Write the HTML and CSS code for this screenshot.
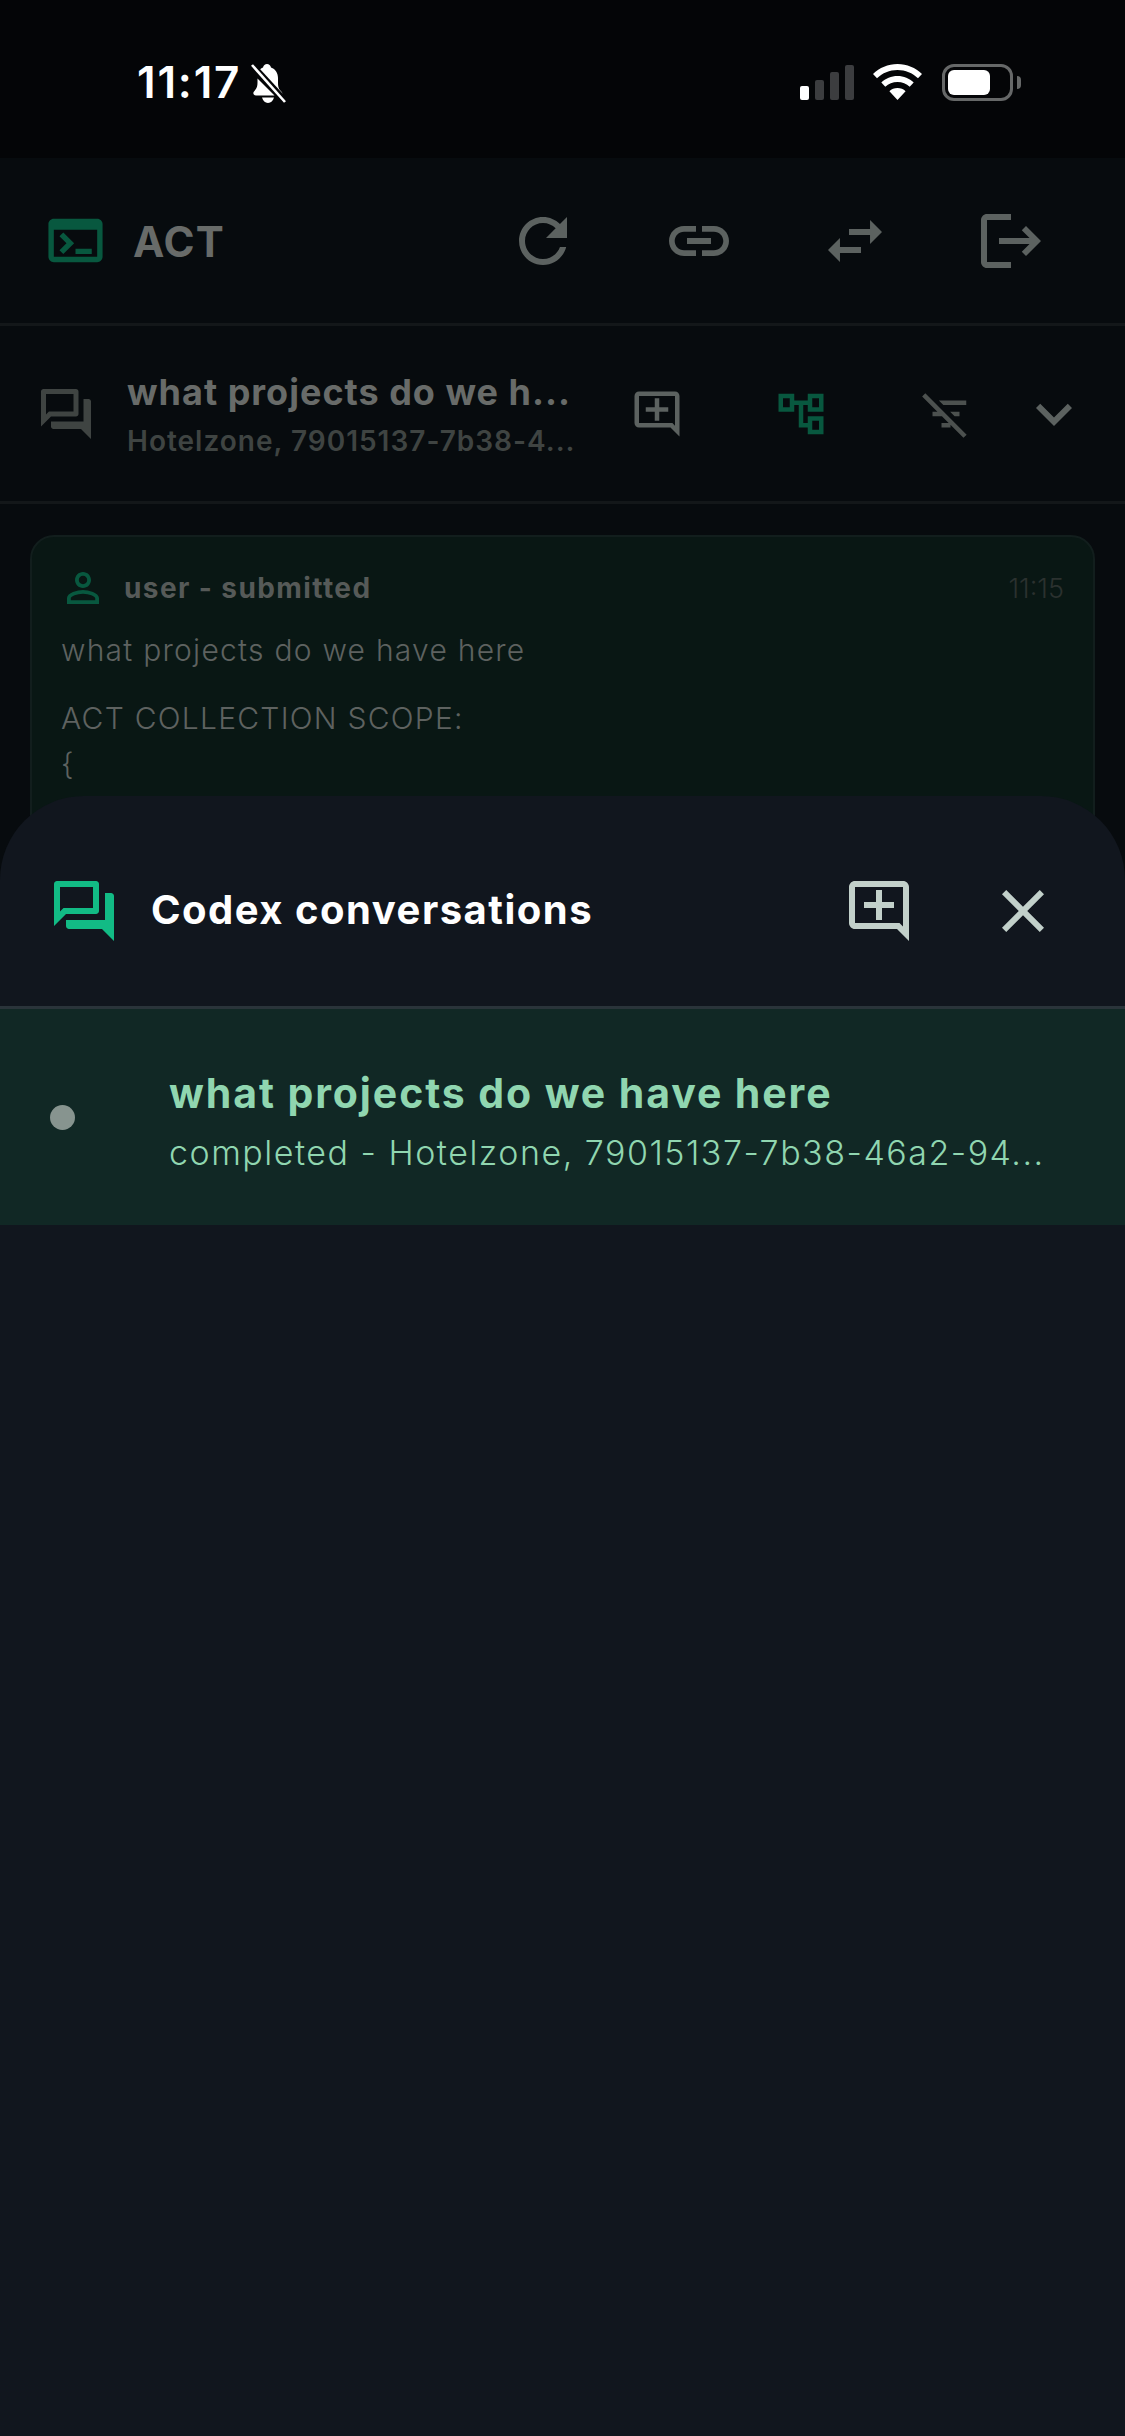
FILE: index.html
```html
<!DOCTYPE html>
<html lang="en">
<head>
<meta charset="utf-8">
<title>ACT</title>
<link rel="stylesheet" href="styles.css">
</head>
<body>
<div class="phone">
  <div class="status">
    <div class="status-left">
      <span class="time">11:17</span>
      <svg class="bell" viewBox="0 0 36 39"><path fill="#fff" d="M17 0c-2 0-3.500 1.500-4 3.500-1.500 .6-3 1.700-4 3L27 26l5 4.800c.5-.8.5-2-.5-3-1.800-1.800-3.500-3.500-3.500-9V14C28 9 25.500 5 21 3.500 20.500 1.500 19 0 17 0zM7.500 14.500v4c0 5-1.600 6.800-3.500 9-1.400 1.700-.5 4 2 4h18.500zM12 33.500c1 3 3 5.500 6 5.500s5-2.500 6-5.500z"/><path stroke="#040507" stroke-width="5" d="M2 0l34 37"/><path stroke="#fff" stroke-width="2.600" d="M2 1l33 37"/></svg>
    </div>
    <div class="status-right">
      <div class="signal"><i class="bar b1 on"></i><i class="bar b2"></i><i class="bar b3"></i><i class="bar b4"></i></div>
      <svg class="wifi" viewBox="0 0 49 36"><path fill="#fff" d="M24.500 0C15 0 6.500 3.700 0 10l4 4.300C9.500 9 16.500 6 24.500 6s15 3 20.500 8.300l4-4.300C42.500 3.700 34 0 24.500 0zM24.500 12c-6.200 0-12 2.400-16.200 6.500l4 4.200C15.500 19.700 19.800 18 24.500 18s9 1.700 12.200 4.700l4-4.200C36.500 14.400 30.700 12 24.500 12zM24.500 24c-3.200 0-6 1.200-8.100 3.200L24.500 36l8.100-8.800C30.500 25.200 27.700 24 24.500 24z"/></svg>
      <div class="battery"><div class="battery-level"></div></div>
      <div class="battery-nub"></div>
    </div>
  </div>

  <header class="app-bar">
    <svg class="ic ic-65 terminal" viewBox="0 0 24 24"><path d="M20 4H4C2.890 4 2 4.900 2 6v12c0 1.100.89 2 2 2h16c1.100 0 2-.9 2-2V6c0-1.100-.89-2-2-2zm0 14H4V8h16v10zm-2-1h-6v-2h6v2zM7.500 17l-1.410-1.410L8.670 13l-2.590-2.590L7.500 9l4 4-4 4z"/></svg>
    <span class="brand">ACT</span>
    <div class="app-actions">
      <svg class="ic ic-72" viewBox="0 0 24 24"><path d="M17.650 6.350C16.200 4.900 14.210 4 12 4c-4.420 0-7.990 3.580-7.990 8s3.570 8 7.990 8c3.730 0 6.840-2.550 7.730-6h-2.080c-.82 2.330-3.040 4-5.650 4-3.310 0-6-2.690-6-6s2.690-6 6-6c1.660 0 3.140.69 4.220 1.780L13 11h7V4l-2.350 2.350z"/></svg>
      <svg class="ic ic-72" viewBox="0 0 24 24"><path d="M3.900 12c0-1.710 1.390-3.100 3.100-3.100h4V7H7c-2.760 0-5 2.240-5 5s2.240 5 5 5h4v-1.900H7c-1.710 0-3.100-1.390-3.100-3.100zM8 13h8v-2H8v2zm9-6h-4v1.900h4c1.710 0 3.100 1.390 3.100 3.100s-1.390 3.100-3.100 3.100h-4V17h4c2.760 0 5-2.240 5-5s-2.240-5-5-5z"/></svg>
      <svg class="ic ic-72" viewBox="0 0 24 24"><path d="M6.990 11L3 15l3.990 4v-3H14v-2H6.990v-3zM21 9l-3.990-4v3H10v2h7.010v3L21 9z"/></svg>
      <svg class="ic ic-72" viewBox="0 0 24 24"><path d="M17 7l-1.410 1.410L18.170 11H8v2h10.170l-2.580 2.580L17 17l5-5zM4 5h8V3H4c-1.100 0-2 .9-2 2v14c0 1.100.9 2 2 2h8v-2H4V5z"/></svg>
    </div>
  </header>

  <section class="conv-bar">
    <svg class="ic ic-60 forum-dim" viewBox="0 0 24 24"><path d="M15 4v7H5.170l-.59.59-.58.58V4h11m1-2H3c-.55 0-1 .45-1 1v14l4-4h10c.55 0 1-.45 1-1V3c0-.55-.45-1-1-1zm5 4h-2v9H6v2c0 .55.45 1 1 1h11l4 4V7c0-.55-.45-1-1-1z"/></svg>
    <div class="conv-text">
      <div class="conv-title">what projects do we h...</div>
      <div class="conv-sub">Hotelzone, 79015137-7b38-4...</div>
    </div>
    <svg class="ic ic-54 conv-add" viewBox="0 0 24 24"><path d="M22 4c0-1.100-.9-2-2-2H4c-1.100 0-2 .9-2 2v12c0 1.100.9 2 2 2h14l4 4V4zm-2 13.170L18.830 16H4V4h16v13.170zM13 5h-2v4H7v2h4v4h2v-4h4V9h-4z"/></svg>
    <svg class="ic ic-54 tree" viewBox="0 0 24 24"><path d="M22 11V3h-7v3H9V3H2v8h7V8h2v10h4v3h7v-8h-7v3h-2V8h2v3h7zM7 9H4V5h3v4zm10 6h3v4h-3v-4zm0-10h3v4h-3V5z"/></svg>
    <svg class="ic ic-54 filter-off" viewBox="0 0 24 24"><path d="M1.390 4.220L2.800 2.810l18.380 18.380-1.410 1.410zM10.830 8H21V6H8.830zM15.830 13H18v-2h-4.170zM6 11h3.170l2 2H6zM10 16h3.170L14 16.830V18h-4z"/></svg>
    <svg class="ic ic-72 chevron" viewBox="0 0 24 24"><path d="M16.590 8.590L12 13.170 7.410 8.590 6 10l6 6 6-6z"/></svg>
  </section>

  <main class="thread">
    <article class="card">
      <div class="card-head">
        <svg class="ic ic-48 person" viewBox="0 0 24 24"><path d="M12 5.900c1.160 0 2.100.94 2.100 2.100s-.94 2.100-2.100 2.100S9.900 9.160 9.900 8s.94-2.100 2.100-2.100m0 9c2.970 0 6.100 1.460 6.100 2.100v1.100H5.900V17c0-.64 3.130-2.100 6.100-2.100M12 4C9.790 4 8 5.790 8 8s1.790 4 4 4 4-1.790 4-4-1.790-4-4-4zm0 9c-2.670 0-8 1.340-8 4v3h16v-3c0-2.660-5.330-4-8-4z"/></svg>
        <span class="card-role">user - submitted</span>
        <span class="card-time">11:15</span>
      </div>
      <p class="card-msg">what projects do we have here</p>
      <p class="card-scope">ACT COLLECTION SCOPE:</p>
      <p class="card-line">{</p>
      <p class="card-line">  "collection_id": "79015137-7b38"</p>
    </article>
  </main>

  <aside class="sheet">
    <div class="sheet-head">
      <svg class="ic ic-72 forum" viewBox="0 0 24 24"><path d="M15 4v7H5.170l-.59.59-.58.58V4h11m1-2H3c-.55 0-1 .45-1 1v14l4-4h10c.55 0 1-.45 1-1V3c0-.55-.45-1-1-1zm5 4h-2v9H6v2c0 .55.45 1 1 1h11l4 4V7c0-.55-.45-1-1-1z"/></svg>
      <h1 class="sheet-title">Codex conversations</h1>
      <svg class="ic ic-72 sheet-btn sheet-add" viewBox="0 0 24 24"><path d="M22 4c0-1.100-.9-2-2-2H4c-1.100 0-2 .9-2 2v12c0 1.100.9 2 2 2h14l4 4V4zm-2 13.170L18.830 16H4V4h16v13.170zM13 5h-2v4H7v2h4v4h2v-4h4V9h-4z"/></svg>
      <svg class="ic ic-72 sheet-btn sheet-close" viewBox="0 0 24 24"><path d="M19 6.410L17.590 5 12 10.590 6.410 5 5 6.410 10.590 12 5 17.590 6.410 19 12 13.410 17.590 19 19 17.590 13.410 12z"/></svg>
    </div>
    <div class="sheet-item">
      <span class="dot"></span>
      <div class="item-text">
        <div class="item-title">what projects do we have here</div>
        <div class="item-sub">completed - Hotelzone, 79015137-7b38-46a2-94...</div>
      </div>
    </div>
  </aside>
</div>
</body>
</html>
```

FILE: styles.css
```css
* { box-sizing: border-box; }
html, body { margin: 0; padding: 0; background: #11161e; }
.phone {
  position: relative;
  width: 1125px;
  height: 2436px;
  overflow: hidden;
  background: #070b0e;
  font-family: Inter, "Liberation Sans", sans-serif;
  display: flex;
  flex-direction: column;
}
.ic { display: block; flex: none; fill: #5c6260; }
.ic-48 { width: 48px; height: 48px; }
.ic-54 { width: 54px; height: 54px; }
.ic-60 { width: 60px; height: 60px; }
.ic-65 { width: 65px; height: 65px; }
.ic-72 { width: 72px; height: 72px; }

/* status bar */
.status {
  height: 158px;
  flex: none;
  background: #040507;
  display: flex;
  justify-content: space-between;
  align-items: flex-start;
  padding: 64px 104px 0 137px;
}
.status-left { display: flex; align-items: flex-start; }
.time {
  font-size: 44px;
  line-height: 37px;
  font-weight: 600;
  color: #fff;
  letter-spacing: 1.8px;
}
.bell { width: 36px; height: 39px; margin-left: 9px; }
.status-right { display: flex; align-items: flex-start; }
.signal { display: flex; align-items: flex-end; gap: 6px; height: 36px; }
.bar { display: block; width: 9px; border-radius: 2px; background: #3c3d3f; }
.bar.on { background: #fff; }
.b1 { height: 14px; }
.b2 { height: 20px; }
.b3 { height: 28px; }
.b4 { height: 35px; }
.wifi { width: 49px; height: 36px; margin-left: 19px; }
.battery {
  width: 71px;
  height: 37px;
  margin-left: 20px;
  border: 3px solid #666868;
  border-radius: 12px;
  padding: 3px;
}
.battery-level { width: 42px; height: 25px; border-radius: 6px; background: #fff; }
.battery-nub {
  width: 4px;
  height: 13px;
  margin: 12px 0 0 4px;
  background: #666868;
  border-radius: 0 4px 4px 0;
}

/* app bar */
.app-bar {
  height: 168px;
  flex: none;
  display: flex;
  align-items: center;
  padding: 0 78px 0 43px;
  border-bottom: 3px solid #131719;
}
.terminal { fill: #08583f; }
.brand {
  margin: 2px 0 0 25px;
  font-size: 42px;
  font-weight: 700;
  color: #686b69;
  letter-spacing: 1px;
}
.app-actions { margin-left: auto; display: flex; gap: 84px; }

/* conversation bar */
.conv-bar {
  height: 178px;
  flex: none;
  display: flex;
  align-items: center;
  padding: 0 27px 0 36px;
  border-bottom: 3px solid #131719;
}
.forum-dim { fill: #3f4442; }
.conv-text { margin-left: 31px; width: 480px; flex: none; }
.conv-title {
  font-size: 36px;
  line-height: 46px;
  font-weight: 700;
  color: #686b69;
  letter-spacing: 1px;
  white-space: nowrap;
}
.conv-sub {
  margin-top: 8px;
  font-size: 28px;
  line-height: 36px;
  font-weight: 600;
  color: #3f4442;
  letter-spacing: 1px;
  white-space: nowrap;
}
.conv-add { margin-left: 23px; }
.tree { margin-left: 90px; fill: #08583f; }
.filter-off { margin-left: 91px; fill: #4c514f; }
.chevron { margin-left: 45px; }

/* thread */
.thread { flex: 1; padding: 31px 30px 0; }
.card {
  height: 600px;
  padding: 27px 29px 0;
  background: #091714;
  border: 2px solid #121e1d;
  border-radius: 24px;
}
.card-head { display: flex; align-items: center; height: 48px; }
.person { fill: #08583f; margin-left: -2px; }
.card-role {
  margin-left: 17px;
  font-size: 28px;
  font-weight: 700;
  color: #565a58;
  letter-spacing: 1.4px;
}
.card-time {
  margin-left: auto;
  font-size: 27px;
  font-weight: 300;
  color: #2b312f;
}
.card-msg, .card-scope, .card-line {
  margin: 0;
  font-size: 30px;
  line-height: 46px;
  font-weight: 300;
  color: #5e6260;
  letter-spacing: 1.25px;
  white-space: pre;
}
.card-msg { margin-top: 15px; }
.card-scope { margin-top: 22px; }

/* bottom sheet */
.sheet {
  position: absolute;
  left: 0;
  right: 0;
  top: 796px;
  bottom: 0;
  background: #11161e;
  border-radius: 84px 84px 0 0;
}
.sheet-head {
  height: 213px;
  display: flex;
  align-items: center;
  padding: 20px 66px 0 48px;
  border-bottom: 3px solid #2a343a;
}
.forum { fill: #12bb85; }
.sheet-title {
  margin: 0 0 3px 31px;
  font-size: 40px;
  font-weight: 700;
  color: #fff;
  letter-spacing: 1.5px;
}
.sheet-btn { fill: #c2d0ca; }
.sheet-add { margin-left: auto; }
.sheet-close { margin-left: 72px; }
.sheet-item {
  height: 216px;
  display: flex;
  align-items: center;
  padding: 0 0 0 50px;
  background: #112825;
}
.dot {
  width: 25px;
  height: 25px;
  border-radius: 50%;
  background: #87948f;
  flex: none;
}
.item-text { margin-left: 94px; padding-top: 6px; }
.item-title {
  font-size: 41px;
  line-height: 50px;
  font-weight: 700;
  color: #90d6b0;
  letter-spacing: 1.9px;
}
.item-sub {
  margin-top: 15px;
  font-size: 34px;
  line-height: 40px;
  font-weight: 300;
  color: #90d6b0;
  letter-spacing: 1.5px;
  white-space: nowrap;
}
```
